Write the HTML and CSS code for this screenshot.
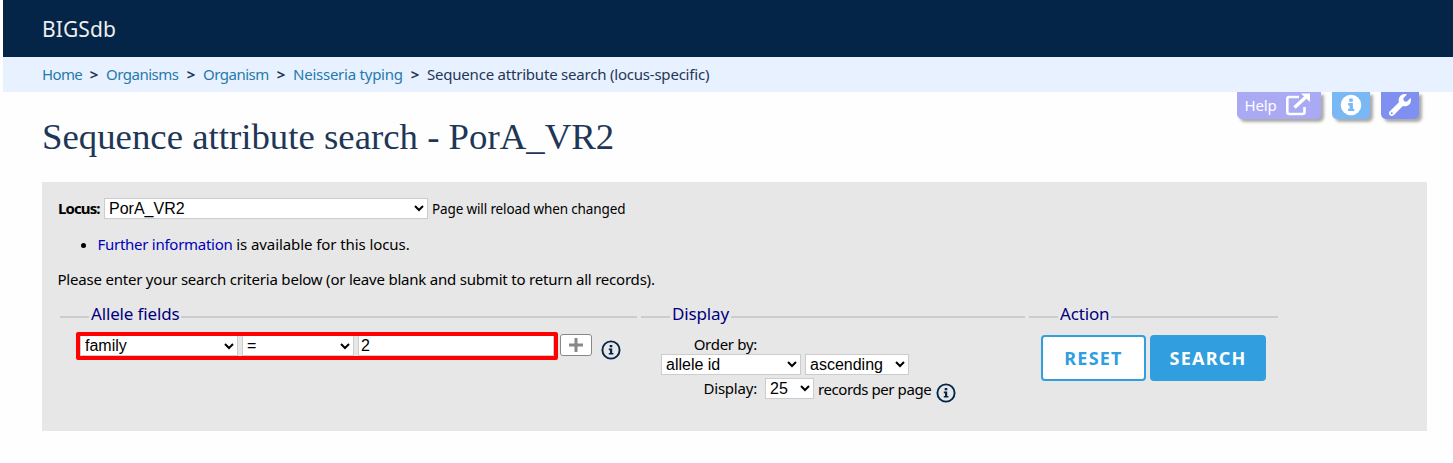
FILE: index.html
```html
<!DOCTYPE html>
<html lang="en">
<head>
<meta charset="utf-8">
<title>Sequence attribute search - PorA_VR2</title>
<link rel="stylesheet" href="styles.css">
</head>
<body>
<header class="banner"><span class="brand">BIGSdb</span></header>
<nav class="crumbs">
  <a class="c1">Home</a><b>&gt;</b><a class="c2">Organisms</a><b>&gt;</b><a class="c3">Organism</a><b>&gt;</b><a class="c4">Neisseria typing</a><b>&gt;</b><span class="c5">Sequence attribute search (locus-specific)</span>
</nav>
<div class="tools">
  <a class="tool help"><span>Help</span>
    <svg width="26" height="23" viewBox="0 0 26 23" fill="none" stroke="#fff" stroke-width="2.6"><path d="M14 4H4.200Q2.300 4 2.300 6V19Q2.300 21 4.200 21H17.500Q19.500 21 19.500 19V14" /><path d="M9.500 14.500 21.500 3.500" stroke-width="3.400"/><path d="M16 .5H25V9Z" fill="#fff" stroke="none"/></svg></a>
  <a class="tool info"><svg width="22" height="22" viewBox="0 0 22 22"><circle cx="11" cy="11" r="10.300" fill="#fff"/><path d="M9.200 4.500h3.600v3.200H9.200zM8.200 9h4.700v5.700h1.400V17H8v-2.300h1.600v-3.300H8.200z" fill="#7ab8f5"/></svg></a>
  <a class="tool wrench"><svg width="22" height="22" viewBox="0 0 512 512"><path fill="#fff" d="M507.700 109.100c-2.200-9-13.500-12.100-20.100-5.500l-74.400 74.400-67.900-11.300L334 98.900l74.400-74.400c6.600-6.600 3.400-17.900-5.700-20.200-47.400-11.700-99.600.9-136.600 37.900-39.600 39.600-50.500 97.100-34.100 147.200L18.700 402.800c-25 25-25 65.500 0 90.500s65.500 25 90.500 0l213.200-213.200c50.100 16.700 107.500 5.700 147.400-34.200 37.100-37.100 49.700-89.300 37.900-136.800zM64 472c-13.300 0-24-10.700-24-24s10.700-24 24-24 24 10.700 24 24-10.700 24-24 24z"/></svg></a>
</div>
<h1>Sequence attribute search - PorA_VR2</h1>
<main class="panel">
  <div class="locus"><label>Locus:</label><select class="s-locus"><option>PorA_VR2</option></select><span class="reload">Page will reload when changed</span></div>
  <ul><li><a>Further information</a> <span class="avail">is available for this locus.</span></li></ul>
  <p>Please enter your search criteria below (or leave blank and submit to return all records).</p>
  <div class="sets">
    <section class="set allele">
      <h2><span>Allele fields</span></h2>
      <div class="fields">
        <div class="highlight"><select class="s-family"><option>family</option></select><select class="s-op"><option>=</option></select><input type="text" value="2"></div>
        <button class="plus" aria-label="Add"><svg width="14" height="14" viewBox="0 0 14 14"><path d="M7 0V14M0 7H14" stroke="#888" stroke-width="3"/></svg></button>
        <svg class="tip" width="20" height="20" viewBox="0 0 20 20"><circle cx="10" cy="10" r="8.600" fill="none" stroke="#042548" stroke-width="1.900"/><path d="M8.700 5h2.600v2.300H8.700zM7.800 8.500h3.400v4.400h1.200v1.700H7.800v-1.700H9v-2.700H7.800z" fill="#042548"/></svg>
      </div>
    </section>
    <section class="set display">
      <h2><span>Display</span></h2>
      <div class="order">Order by:</div>
      <div class="row"><select class="s-id"><option>allele id</option></select><select class="s-asc"><option>ascending</option></select></div>
      <div class="row records"><span class="lab">Display:</span><select class="s-num"><option>25</option></select><span class="per">records per page</span>
        <svg class="tip" width="20" height="20" viewBox="0 0 20 20"><circle cx="10" cy="10" r="8.600" fill="none" stroke="#042548" stroke-width="1.900"/><path d="M8.700 5h2.600v2.300H8.700zM7.800 8.500h3.400v4.400h1.200v1.700H7.800v-1.700H9v-2.700H7.800z" fill="#042548"/></svg>
      </div>
    </section>
    <section class="set action">
      <h2><span>Action</span></h2>
      <div class="buttons"><button class="reset">RESET</button><button class="search">SEARCH</button></div>
    </section>
  </div>
</main>
</body>
</html>
```
FILE: styles.css
```css
* { box-sizing: border-box; }
html { background: #fefefe; }
body { margin: 0 0 0 3px; height: 463px; overflow: hidden; background: #fefefe; color: #000; font: 15px/20px "Noto Sans", sans-serif; font-stretch: 90%; letter-spacing: -.21px; white-space: nowrap; }
.banner { height: 57px; padding: 15px 0 0 39px; background: #042548; }
.brand { color: #eee; font-size: 21px; line-height: 28px; letter-spacing: .1px; }
.crumbs { display: flex; height: 35px; padding: 7px 0 0 39px; background: #e7f1ff; color: #1e3757; }
.crumbs a { color: #267aab; }
.crumbs b { width: 24px; text-align: center; }
.crumbs .c1 { width: 40px; letter-spacing: -.65px; }
.crumbs .c2 { width: 73px; letter-spacing: -.5px; }
.crumbs .c3 { width: 66px; letter-spacing: -.5px; }
.crumbs .c4 { width: 110px; letter-spacing: -.24px; }
.tools { display: flex; height: 28px; gap: 11px; justify-content: flex-end; padding-right: 34px; }
.tool { display: flex; align-items: center; justify-content: center; width: 38px; height: 27px; padding-bottom: 2px; border-radius: 0 0 5px 5px; box-shadow: 3px 3px 3px #aaa; color: #fff; }
.tool.help { width: 84px; gap: 9px; padding-right: 2px; background: #a9a9f4; }
.tool.info { padding-right: 1px; background: #7ab8f5; }
.tool.wrench { background: #8090f0; }
h1 { margin: -5px 0 0 39px; height: 67px; font: 36.800px/44px "Liberation Serif", serif; letter-spacing: 0; color: #1e3757; }
.panel { width: 1385px; height: 249px; margin-left: 39px; padding: 16px; background: #e7e7e7; }
select, input { height: 21px; margin: 0; padding: 0; border: 1px solid #ccc; border-radius: 0; background-color: #fff; color: #000; font: 16px/19px "Liberation Sans", sans-serif; letter-spacing: 0; }
.locus { display: flex; gap: 4px; height: 21px; }
.locus label { width: 42px; font-weight: bold; letter-spacing: -.9px; }
.s-locus { width: 324px; }
.reload { padding-top: 1px; font-size: 13.500px; letter-spacing: -.13px; }
ul { margin: 15px 0; padding-left: 39.500px; }
li a { letter-spacing: -.27px; }
.avail { letter-spacing: -.08px; }
a { color: #0000b8; }
p { margin: 0 0 0 -.5px; }
.sets { display: flex; gap: 4px; padding: 14px 0 0 2px; }
.set h2 { display: flex; align-items: center; gap: 2px; height: 22px; margin: 0; color: #000080; font-size: 17px; font-weight: normal; letter-spacing: -.15px; }
.set h2::before, .set h2::after { content: ""; height: 2px; margin-top: 5px; background: #ccc; }
.set h2::before { width: 29px; }
.set h2::after { flex: 1; }
.allele { width: 577px; }
.display { width: 384px; }
.action { width: 249px; }
.fields { display: flex; padding: 7px 0 0 16px; }
.highlight { display: flex; gap: 4px; width: 482px; height: 28px; border: 4px solid #f00; border-radius: 2px; background: #e7e7e7; }
.highlight select, .highlight input { height: 20px; border-top: 0; }
.s-family { width: 158px; }
.s-op { width: 112px; }
.highlight input { width: 196px; padding-left: 2px; }
.plus { display: flex; align-items: center; justify-content: center; width: 32px; height: 22px; margin: 2px 0 0 2px; padding: 0; border: 1px solid #888; border-radius: 3px; background: #fff; }
.fields .tip { margin: 8px 0 0 9px; }
.order { width: 116px; height: 20px; margin-top: 9px; text-align: right; letter-spacing: -.3px; }
.row { display: flex; gap: 4px; padding-left: 20px; }
.s-id { width: 140px; }
.s-asc { width: 104px; }
.records { margin-top: 3px; }
.lab { width: 96px; margin-right: 4px; text-align: right; }
.per { width: 114px; padding-top: 1px; letter-spacing: -.42px; }
.records .tip { margin-top: 5px; }
.s-num { width: 49px; }
.buttons { display: flex; gap: 4px; padding: 10px 0 0 12px; }
.buttons button { height: 46px; padding: 0; border: 2px solid #309edf; border-radius: 4px; background: #fff; color: #309edf; font: bold 18px/24px "Noto Sans", sans-serif; font-stretch: 90%; letter-spacing: 1.200px; }
.reset { width: 105px; }
.buttons .search { width: 116px; background: #309edf; color: #fff; }
```
